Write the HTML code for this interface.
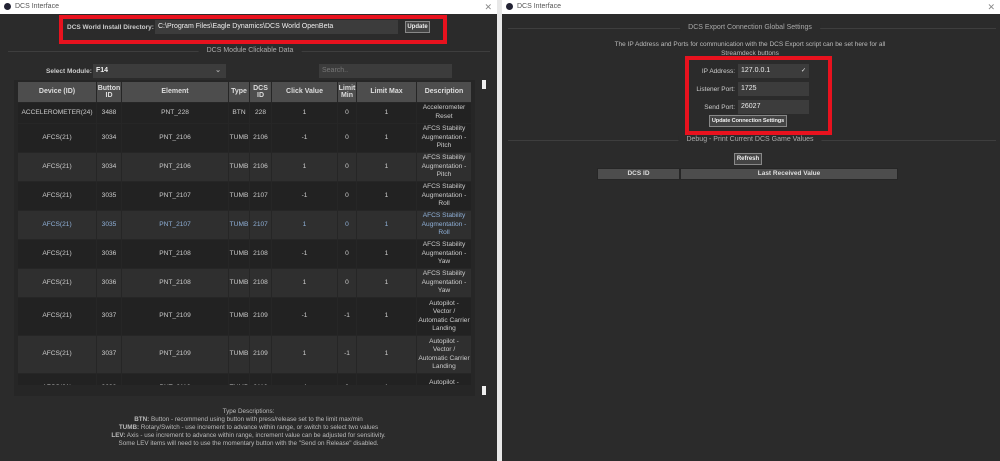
<!DOCTYPE html><html><head><style>
*{box-sizing:border-box;margin:0;padding:0}
body{width:1000px;height:461px;background:#2b2b2b;font-family:"Liberation Sans",sans-serif;position:relative;overflow:hidden;color:#ddd;font-size:7px}
.a{position:absolute}
.tb{background:#fff;height:14px;color:#555;font-size:7px;line-height:14px;padding-left:15px}
.dot{width:7px;height:7px;border-radius:50%;background:#223;left:4px;top:3px}
.red{border:4px solid #e8121e}
.inp{background:#3c3c3c;color:#eee;font-size:7px;padding-left:3px;line-height:14px;white-space:nowrap}
.btn{background:#444;border:1px solid #888;color:#eee;font-size:6px;font-weight:bold;text-align:center;line-height:11px;white-space:nowrap}
.hr{height:1px;background:#3e3e3e}
.ttl{color:#aaa;background:#2b2b2b;padding:0 8px;font-size:7px;transform:translateX(-50%);white-space:nowrap}
table{border-collapse:separate;border-spacing:1px;font-size:6.6px;text-align:center}
th{background:#4d4d4d;color:#ddd;font-weight:bold;height:20px;line-height:7.5px;font-size:7px}
td{color:#ccc;line-height:8.7px;padding:0}
tr.o td{background:#222}tr.e td{background:#2f2f2f}
tr.b td{color:#8fb0d8}
tr.r1 td{height:20px}tr.r3 td{height:28px}tr.r4 td{height:37px;line-height:8.3px}
</style></head><body>
<div class="a tb" style="left:0;top:0;width:497px">DCS Interface<span style="position:absolute;right:5px;font-size:9px;color:#888">✕</span></div>
<div class="a dot"></div>
<div class="a tb" style="left:502px;top:0;width:498px">DCS Interface<span style="position:absolute;right:5px;font-size:9px;color:#888">✕</span></div>
<div class="a dot" style="left:506px"></div>
<div class="a" style="left:497px;top:0;width:5px;height:461px;background:#e8e8e8"></div>

<div class="a red" style="left:59px;top:15px;width:388px;height:29px"></div>
<div class="a" style="left:67px;top:24px;color:#ccc;font-weight:bold;font-size:6.5px">DCS World Install Directory:</div>
<div class="a inp" style="left:155px;top:20px;width:243px;height:14px">C:\Program Files\Eagle Dynamics\DCS World OpenBeta</div>
<div class="a btn" style="left:405px;top:21px;width:25px;height:12px">Update</div>

<div class="a hr" style="left:8px;top:51px;width:482px"></div>
<div class="a ttl" style="left:250px;top:47px">DCS Module Clickable Data</div>
<div class="a" style="left:46px;top:68px;color:#ccc;font-weight:bold;font-size:6.5px">Select Module:</div>
<div class="a inp" style="left:93px;top:64px;width:133px;height:14px;font-weight:bold">F14<span style="position:absolute;right:5px;color:#aaa">⌄</span></div>
<div class="a inp" style="left:319px;top:64px;width:133px;height:14px;color:#777">Search..</div>
<div class="a" style="left:14px;top:80px;width:461px;height:316px;background:#262626"></div>
<div class="a" style="left:482px;top:80px;width:4px;height:9px;background:#eee"></div>
<div class="a" style="left:482px;top:386px;width:4px;height:9px;background:#eee"></div>
<div class="a" style="left:17px;top:81px;width:455px;height:304px;overflow:hidden">
<table style="width:455px">
<tr><th style="width:78px">Device (ID)</th><th style="width:24px">Button<br>ID</th><th style="width:106px">Element</th><th style="width:20px">Type</th><th style="width:21px">DCS<br>ID</th><th style="width:65px">Click Value</th><th style="width:18px">Limit<br>Min</th><th style="width:59px">Limit Max</th><th>Description</th></tr>
<tr class="o r1"><td>ACCELEROMETER(24)</td><td>3488</td><td>PNT_228</td><td>BTN</td><td>228</td><td>1</td><td>0</td><td>1</td><td>Accelerometer<br>Reset</td></tr>
<tr class="o r3"><td>AFCS(21)</td><td>3034</td><td>PNT_2106</td><td>TUMB</td><td>2106</td><td>-1</td><td>0</td><td>1</td><td>AFCS Stability<br>Augmentation -<br>Pitch</td></tr>
<tr class="e r3"><td>AFCS(21)</td><td>3034</td><td>PNT_2106</td><td>TUMB</td><td>2106</td><td>1</td><td>0</td><td>1</td><td>AFCS Stability<br>Augmentation -<br>Pitch</td></tr>
<tr class="o r3"><td>AFCS(21)</td><td>3035</td><td>PNT_2107</td><td>TUMB</td><td>2107</td><td>-1</td><td>0</td><td>1</td><td>AFCS Stability<br>Augmentation -<br>Roll</td></tr>
<tr class="e b r3"><td>AFCS(21)</td><td>3035</td><td>PNT_2107</td><td>TUMB</td><td>2107</td><td>1</td><td>0</td><td>1</td><td>AFCS Stability<br>Augmentation -<br>Roll</td></tr>
<tr class="o r3"><td>AFCS(21)</td><td>3036</td><td>PNT_2108</td><td>TUMB</td><td>2108</td><td>-1</td><td>0</td><td>1</td><td>AFCS Stability<br>Augmentation -<br>Yaw</td></tr>
<tr class="e r3"><td>AFCS(21)</td><td>3036</td><td>PNT_2108</td><td>TUMB</td><td>2108</td><td>1</td><td>0</td><td>1</td><td>AFCS Stability<br>Augmentation -<br>Yaw</td></tr>
<tr class="o r4"><td>AFCS(21)</td><td>3037</td><td>PNT_2109</td><td>TUMB</td><td>2109</td><td>-1</td><td>-1</td><td>1</td><td>Autopilot -<br>Vector /<br>Automatic Carrier<br>Landing</td></tr>
<tr class="e r4"><td>AFCS(21)</td><td>3037</td><td>PNT_2109</td><td>TUMB</td><td>2109</td><td>1</td><td>-1</td><td>1</td><td>Autopilot -<br>Vector /<br>Automatic Carrier<br>Landing</td></tr>
<tr class="o r3"><td>AFCS(21)</td><td>3038</td><td>PNT_2110</td><td>TUMB</td><td>2110</td><td>-1</td><td>0</td><td>1</td><td>Autopilot -<br>Altitude Hold</td></tr>
</table></div>
<div class="a" style="left:0;top:408px;width:497px;text-align:center;color:#bbb;font-size:6.3px;line-height:8px">Type Descriptions:<br><b>BTN:</b> Button - recommend using button with press/release set to the limit max/min<br><b>TUMB:</b> Rotary/Switch - use increment to advance within range, or switch to select two values<br><b>LEV:</b> Axis - use increment to advance within range, increment value can be adjusted for sensitivity.<br>Some LEV items will need to use the momentary button with the "Send on Release" disabled.</div>

<div class="a hr" style="left:508px;top:28px;width:488px"></div>
<div class="a ttl" style="left:750px;top:24px">DCS Export Connection Global Settings</div>
<div class="a" style="left:600px;top:41px;width:300px;text-align:center;color:#bbb;font-size:6.5px;line-height:8.5px">The IP Address and Ports for communication with the DCS Export script can be set here for all Streamdeck buttons</div>
<div class="a hr" style="left:508px;top:140px;width:488px"></div>
<div class="a ttl" style="left:750px;top:136px">Debug - Print Current DCS Game Values</div>
<div class="a red" style="left:685px;top:56px;width:147px;height:79px;background:#2b2b2b"></div>
<div class="a" style="left:690px;top:68px;width:45px;text-align:right;color:#ccc;font-size:6.5px;white-space:nowrap">IP Address:</div>
<div class="a" style="left:690px;top:86px;width:45px;text-align:right;color:#ccc;font-size:6.5px;white-space:nowrap">Listener Port:</div>
<div class="a" style="left:690px;top:104px;width:45px;text-align:right;color:#ccc;font-size:6.5px;white-space:nowrap">Send Port:</div>
<div class="a inp" style="left:738px;top:64px;width:71px;height:14px">127.0.0.1<span style="position:absolute;right:3px;font-size:6px">✓</span></div>
<div class="a inp" style="left:738px;top:82px;width:71px;height:14px">1725</div>
<div class="a inp" style="left:738px;top:100px;width:71px;height:14px">26027</div>
<div class="a btn" style="left:709px;top:115px;width:78px;height:12px;font-size:5.6px;letter-spacing:-0.1px">Update Connection Settings</div>
<div class="a btn" style="left:734px;top:153px;width:28px;height:12px">Refresh</div>
<div class="a" style="left:597px;top:168px;width:301px;height:12px;background:#262626"></div>
<div class="a" style="left:598px;top:169px;width:81px;height:10px;background:#4d4d4d;text-align:center;font-weight:bold;font-size:6.5px;line-height:10px">DCS ID</div>
<div class="a" style="left:681px;top:169px;width:216px;height:10px;background:#4d4d4d;text-align:center;font-weight:bold;font-size:6.5px;line-height:10px">Last Received Value</div>
</body></html>
